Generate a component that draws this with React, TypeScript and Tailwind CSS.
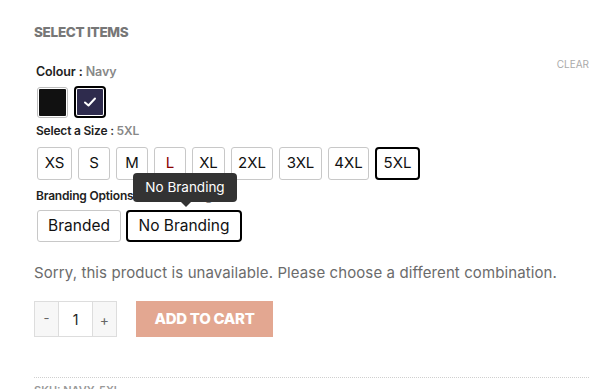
import React from "react";

const sizes: { label: string; w: string; cls?: string }[] = [
  { label: "XS", w: "w-[35px]" },
  { label: "S", w: "w-[32px]" },
  { label: "M", w: "w-[32px]" },
  { label: "L", w: "w-[32px]", cls: "text-[#8b0000]" },
  { label: "XL", w: "w-[33px]" },
  { label: "2XL", w: "w-[42px]" },
  { label: "3XL", w: "w-[43px]" },
  { label: "4XL", w: "w-[41px]" },
  { label: "5XL", w: "w-[45px]", cls: "selected" },
];

export default function App() {
  return (
    <div className="w-[600px] h-[389px] overflow-hidden bg-white font-['Inter','Liberation_Sans',sans-serif] text-[#222]">
      <div className="pl-[34px] pr-[11px] pt-[22px]">
        <h3 className="text-[13.5px] leading-[20px] font-extrabold text-[#777] tracking-[-0.3px]">SELECT ITEMS</h3>

        <div className="flex justify-between mt-[14px]">
          <div className="pl-[2px]">
            <div className="mt-[8px] text-[12.5px] leading-[16px] font-semibold tracking-[-0.1px]">
              Colour : <span className="text-[#888]">Navy</span>
            </div>
            <div className="flex gap-[6px] mt-[7px] pl-[1px]">
              <div className="w-[31px] h-[31px] rounded-[3px] border border-[#bdbdbd] p-[1px]">
                <div className="w-full h-full bg-[#111111] rounded-[1px]" />
              </div>
              <div className="w-[32px] h-[32px] rounded-[4px] border-2 border-black p-[1px] -mt-[1px]">
                <div className="w-full h-full bg-[#2e2b4d] rounded-[1px] flex items-center justify-center">
                  <svg width="14" height="12" viewBox="0 0 14 12" fill="none">
                    <path d="M2 6.5 L5.5 9.5 L12 2.5" stroke="white" strokeWidth="2" strokeLinecap="round" strokeLinejoin="round" />
                  </svg>
                </div>
              </div>
            </div>
          </div>
          <span className="text-[10px] leading-[16px] text-[#aaa]">CLEAR</span>
        </div>

        <div className="pl-[2px]">
          <div className="mt-[5px] text-[12px] leading-[16px] font-semibold tracking-[-0.2px]">
            Select a Size : <span className="text-[#888]">5XL</span>
          </div>
          <div className="flex gap-[6px] mt-[8px] pl-[1px]">
            {sizes.map((s) =>
              s.cls === "selected" ? (
                <div
                  key={s.label}
                  className={`${s.w} h-[33px] rounded-[4px] border-2 border-black flex items-center justify-center text-[15px] text-[#111]`}
                >
                  {s.label}
                </div>
              ) : (
                <div
                  key={s.label}
                  className={`${s.w} h-[33px] rounded-[3px] border border-[#c8c8c8] flex items-center justify-center text-[15px] ${s.cls ?? "text-[#111]"}`}
                >
                  {s.label}
                </div>
              )
            )}
          </div>

          <div className="mt-[8px] text-[12px] leading-[16px] font-semibold tracking-[-0.2px]">
            Branding Options : <span className="text-[#888]">No Branding</span>
          </div>
          <div className="flex gap-[5px] mt-[6px] pl-[1px]">
            <div className="w-[84px] h-[32px] rounded-[3px] border border-[#c8c8c8] flex items-center justify-center text-[15.5px] text-[#111]">
              Branded
            </div>
            <div className="relative w-[116px] h-[32px] rounded-[4px] border-2 border-black flex items-center justify-center text-[15.5px] text-[#111]">
              No Branding
              <div className="absolute left-[5px] top-[-39px] w-[104px] h-[29px] rounded-[4px] bg-[#333333] text-white text-[13.5px] flex items-center justify-center">
                No Branding
                <div className="absolute left-[48px] bottom-[-5px] w-0 h-0 border-l-[5px] border-r-[5px] border-t-[5px] border-l-transparent border-r-transparent border-t-[#333333]" />
              </div>
            </div>
          </div>
        </div>

        <p className="mt-[19px] text-[15px] leading-[24px] text-[#6b6b6b] tracking-[0.1px]">
          Sorry, this product is unavailable. Please choose a different combination.
        </p>

        <div className="flex items-center mt-[16px]">
          <div className="flex h-[36px] w-[83px] border border-[#dddddd]">
            <div className="w-[23px] bg-[#f7f7f7] flex items-center justify-center text-[13px] text-[#666]">-</div>
            <div className="w-[35px] bg-white border-x border-[#dddddd] flex items-center justify-center text-[14px] text-[#222]">1</div>
            <div className="flex-1 bg-[#f7f7f7] flex items-center justify-center text-[14px] text-[#666]">+</div>
          </div>
          <button className="ml-[19px] w-[137px] h-[36px] bg-[#e3a791] text-white text-[15px] font-extrabold tracking-[-0.3px]">
            ADD TO CART
          </button>
        </div>

        <div className="mt-[40px] border-t border-dotted border-[#cfcfcf]" />
        <div className="mt-[4px] text-[11px] leading-[16px] font-semibold text-[#999]">SKU: NAVY-5XL</div>
      </div>
    </div>
  );
}
